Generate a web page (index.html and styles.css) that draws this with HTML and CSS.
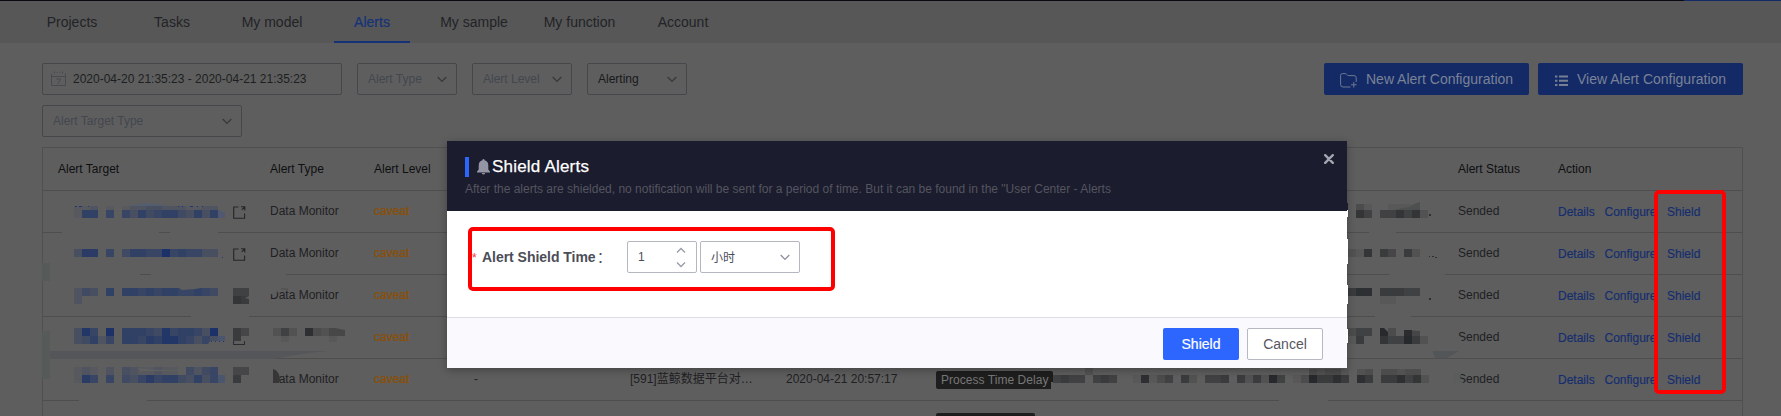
FILE: index.html
```html
<!DOCTYPE html>
<html lang="en">
<head>
<meta charset="utf-8">
<title>Alerts</title>
<link rel="stylesheet" href="styles.css">
</head>
<body>
<div class="page">
  <div class="topline"><span class="topline-accent"></span></div>
  <nav class="nav">
    <a class="tab">Projects</a><a class="tab">Tasks</a><a class="tab">My model</a><a class="tab tab-active"><span>Alerts</span></a><a class="tab">My sample</a><a class="tab">My function</a><a class="tab">Account</a>
  </nav>
  <main class="main">
    <div class="toolbar">
      <div class="filters">
        <div class="field field-date">
          <svg class="cal" width="15" height="16" viewBox="0 0 15 16" fill="none" stroke="#47494d" stroke-width="1"><path d="M.5 2.5V14.5H14.5V2.5M.5 5.5H14.5M3.5 .5v2M11.5 .5v2M5.5 1.5h1M8.5 1.5h1"/><path d="M5.3 8h4.2L7 12.8"/></svg>
          <span>2020-04-20 21:35:23 - 2020-04-21 21:35:23</span>
        </div>
        <div class="field muted"><span>Alert Type</span><svg class="chev" width="10" height="7" viewBox="0 0 10 7"><path d="M.7 1 5 5.4 9.3 1"/></svg></div>
        <div class="field muted"><span>Alert Level</span><svg class="chev" width="10" height="7" viewBox="0 0 10 7"><path d="M.7 1 5 5.4 9.3 1"/></svg></div>
        <div class="field"><span>Alerting</span><svg class="chev" width="10" height="7" viewBox="0 0 10 7"><path d="M.7 1 5 5.4 9.3 1"/></svg></div>
      </div>
      <div class="actions">
        <button class="btn-dim"><svg class="ico-folder" width="18" height="16" viewBox="0 0 18 16" fill="none" stroke="#6f7891" stroke-width="1"><path d="M10.5 14H3Q.6 14 .6 11.6V2.4Q.6.6 2.4.6H5.2Q6.2.6 6.8 1.6T8.6 2.6H14Q16.2 2.6 16.2 4.8V9M13.8 9v5.6M11 11.8h5.6"/></svg>New Alert Configuration</button>
        <button class="btn-dim"><svg class="ico-list" width="13" height="12" viewBox="0 0 13 12" fill="#777f95"><path d="M0 .5h2.4v2H0zM4 .5h9v2H4zM0 4.8h2.4v2H0zM4 4.8h9v2H4zM0 9.1h2.4v2H0zM4 9.1h9v2H4z"/></svg>View Alert Configuration</button>
      </div>
    </div>
    <div class="field field-wide muted"><span>Alert Target Type</span><svg class="chev" width="10" height="7" viewBox="0 0 10 7"><path d="M.7 1 5 5.4 9.3 1"/></svg></div>
    <div class="table" id="table">
      <div class="row head"><span>Alert Target</span><span>Alert Type</span><span>Alert Level</span><span></span><span></span><span></span><span></span><span>Alert Status</span><span>Action</span></div>
    </div>
  </main>
  <svg class="mosaic" id="mosaic" width="1781" height="416" viewBox="0 0 1781 416"></svg>
  <div class="mark mark-actions"></div>

  <section class="modal">
    <header class="modal-head">
      <div class="title"><i class="bar"></i><svg width="13" height="16" viewBox="0 0 13 16" fill="#9496a5"><path d="M6.5 0Q7.5 0 7.6 1.2Q11.3 2.2 11.3 6.5V10.5L13 12.6V13.4H0V12.6L1.7 10.5V6.5Q1.7 2.2 5.4 1.2Q5.5 0 6.5 0ZM4.8 14H8.2Q7.7 15.5 6.5 15.5T4.8 14Z"/></svg><h1>Shield Alerts</h1></div>
      <p>After the alerts are shielded, no notification will be sent for a period of time. But it can be found in the "User Center - Alerts</p>
      <svg class="close" width="10" height="10" viewBox="0 0 10 10"><path d="M1.2 1.2 8.8 8.8M8.8 1.2 1.2 8.8" stroke="#a3a4b0" stroke-width="2.4" stroke-linecap="round"/></svg>
    </header>
    <div class="modal-body">
      <div class="form-row">
        <span class="req">*</span><label>Alert Shield Time</label><span class="colon">：</span>
        <div class="input num"><span>1</span><svg width="10" height="21" viewBox="0 0 10 21" fill="none" stroke="#979ba5" stroke-width="1.3"><path d="M1 5.5 5 1.5 9 5.5M1 15.5 5 19.5 9 15.5"/></svg></div>
        <div class="input unit"><span class="hours">小时</span><svg width="10" height="7" viewBox="0 0 10 7" fill="none" stroke="#8d919d" stroke-width="1.3"><path d="M.7 1 5 5.4 9.3 1"/></svg></div>
      </div>
      <div class="mark mark-form"></div>
    </div>
    <footer class="modal-foot"><button class="ok">Shield</button><button class="cancel">Cancel</button></footer>
  </section>
  <svg class="edge" width="1" height="166" viewBox="0 0 1 166"><path fill="#1b1c2e" d="M0 0h1v7H0z"/><path fill="#fff" d="M0 7h1v7H0zM0 36h1v25H0zM0 82h1v19H0zM0 126h1v14H0z"/></svg>
</div>
<script src="app.js"></script>
</body>
</html>
```

FILE: styles.css
```css
* { box-sizing: border-box; }
body { margin: 0; font-family: "Liberation Sans", Arial, "Noto Sans CJK SC", sans-serif; font-size: 12px; line-height: 14px; color: #1f2023; background: #5e5e5e; }
.page { position: relative; width: 1781px; height: 416px; overflow: hidden; background: #5e5e5e; }
.topline { height: 1px; background: #0a0a12; display: flex; justify-content: flex-end; }
.topline-accent { width: 97px; background: #142a66; }
.nav { height: 42px; background: #575757; padding-left: 22px; display: grid; grid-template-columns: 100px 100px 100px 100px 104px 107px 100px; font-size: 14px; line-height: 43px; text-align: center; color: #222326; }
.tab { display: block; white-space: nowrap; }
.tab-active { color: #153279; padding: 0 12px; }
.tab-active span { display: block; height: 42px; border-bottom: 2px solid #153279; -webkit-text-stroke: .2px #153279; }
.main { padding: 20px 38px 0 42px; }
.toolbar { display: flex; justify-content: space-between; }
.filters { display: flex; gap: 15px; }
.actions { display: flex; gap: 9px; }
.field { width: 100px; height: 32px; border: 1px solid #45474b; border-radius: 2px; padding: 0 9px 0 10px; display: flex; align-items: center; justify-content: space-between; color: #18191b; white-space: nowrap; }
.field-date { width: 300px; padding-left: 8px; justify-content: flex-start; gap: 7px; color: #1d1e21; }
.field-wide { width: 200px; margin-top: 10px; }
.muted { color: #43474e; }
.chev { fill: none; stroke: #38393d; stroke-width: 1.3; }
.btn-dim { width: 205px; height: 32px; border: 0; border-radius: 2px; background: #132a66; color: #7a8297; font: 14px "Liberation Sans", Arial, sans-serif; display: flex; align-items: center; padding: 0; white-space: nowrap; }
.ico-folder { margin: 3px 8px 0 16px; }
.ico-list { margin: 3px 9px 0 17px; }
.table { margin-top: 10px; border: 1px solid #505050; border-bottom: 0; width: 1701px; }
.row { height: 42px; border-bottom: 1px solid #4e4e4e; display: grid; grid-template-columns: 212px 104px 100px 156px 156px 150px 522px 100px 1fr; padding: 13px 0 0 15px; align-items: start; white-space: nowrap; }
.head { height: 43px; color: #0e0f11; padding-top: 14px; }
.level { color: #8d4f04; -webkit-text-stroke: .2px #8d4f04; }
.target { display: flex; padding: 2px 0 0 175px; }
.links { display: flex; color: #142d70; padding-top: 1px; -webkit-text-stroke: .15px #142d70; }
.links a:nth-child(1) { width: 46.5px; }
.links a:nth-child(2) { width: 62.5px; }
.badge { display: block; width: 117px; height: 18px; line-height: 18px; padding: 0 5px; border-radius: 2px; background: #1e1e1e; color: #777; margin-top: -1px; font-weight: 400; letter-spacing: .04px; }
.badge-next { width: 99px; }
.proj { height: 14px; }
.mosaic { position: absolute; left: 0; top: 0; }
.edge { position: absolute; left: 1347px; top: 203px; }
.mark { position: absolute; border: 4px solid #f00; border-radius: 5px; }
.mark-actions { left: 1654px; top: 190px; width: 72px; height: 204px; }
.mark-form { left: 21px; top: 16px; width: 367px; height: 64px; }
.modal { position: absolute; left: 447px; top: 141px; width: 900px; height: 227px; display: flex; flex-direction: column; background: #fff; box-shadow: 0 2px 8px rgba(0,0,0,.3); }
.modal-head { position: relative; height: 70px; background: #1b1c2e; padding: 16px 18px 0; }
.title { display: flex; align-items: center; height: 20px; }
.bar { width: 4px; height: 20px; background: #2d66ff; margin-right: 8px; }
h1 { margin: 0 0 0 2px; font-size: 17px; font-weight: 400; color: #fff; line-height: 20px; -webkit-text-stroke: .25px #fff; letter-spacing: .2px; }
.modal-head p { margin: 5px 0 0; line-height: 14px; color: #54555f; white-space: nowrap; }
.close { position: absolute; right: 13px; top: 13px; }
.modal-body { position: relative; height: 106px; padding: 30px 0 0 25px; }
.form-row { display: flex; align-items: center; height: 32px; color: #4b4d57; }
.req { color: #f33; width: 10px; padding-top: 1px; }
.form-row label { font-size: 14px; font-weight: 700; white-space: nowrap; line-height: 16px; letter-spacing: -.03px; width: 115px; }
.colon { font-family: "Noto Sans CJK SC", sans-serif; font-size: 14px; line-height: 14px; width: 30px; padding-bottom: 3px; }
.input { height: 32px; border: 1px solid #b4b7c0; border-radius: 2px; display: flex; align-items: center; justify-content: space-between; padding: 0 9px 0 10px; }
.num { width: 70px; margin-right: 3px; padding-right: 10px; }
.unit { width: 100px; }
.hours { font-family: "Noto Sans CJK SC", sans-serif; padding-bottom: 1px; }
.modal-foot { height: 51px; background: #f9f9fe; border-top: 1px solid #dcdee5; display: flex; justify-content: flex-end; gap: 8px; padding: 10px 24px 0 0; }
.modal-foot button { width: 76px; height: 32px; border-radius: 2px; font: 14px "Liberation Sans", Arial, sans-serif; padding: 0; }
.ok { border: 0; background: #2d66ff; color: #fff; -webkit-text-stroke: .2px #fff; }
.modal-foot .cancel { border: 1px solid #b6b8c2; background: #fff; color: #55575f; }
```

FILE: app.js
```js
const link = '<svg width="13" height="13" viewBox="0 0 13 13" fill="none" stroke="#252628" stroke-width="1.1"><path d="M5.5 1H.7V12.3H11.6V7.5M8 .7h3.8V4.5M11.6 1 8.8 3.8"/></svg>';
const table = document.getElementById('table');
for (let i = 0; i < 6; i++) {
  const last = i === 4;
  const row = document.createElement('div');
  row.className = 'row';
  if (i < 5) {
    row.innerHTML = `<span class="target">${i < 2 ? link : ''}</span><span>${i === 3 ? '' : 'Data Monitor'}</span><span class="level">caveat</span><span>${last ? '-' : ''}</span><span class="proj">${last ? '[591]蓝鲸数据平台对…' : ''}</span><span>${last ? '2020-04-21 20:57:17' : ''}</span><span>${last ? '<b class="badge">Process Time Delay</b>' : ''}</span><span>Sended</span><span class="links"><a>Details</a><a>Configure</a><a>Shield</a></span>`;
  } else {
    row.innerHTML = '<i></i><i></i><i></i><i></i><i></i><i></i><b class="badge badge-next"></b>';
  }
  table.appendChild(row);
}

// Pixelated cells: each digit is the strength of one 8px cell, 0 leaves it empty.
const base = [94, 94, 94];
const blue = [27, 49, 104];
const grey = [40, 41, 44];
function mix(c, n) {
  return 'rgb(' + base.map((b, i) => Math.round(b + (c[i] - b) * n / 9)).join(',') + ')';
}
let out = '';
function cells(x, y, h, tint, levels) {
  [...levels].forEach((ch, k) => {
    if (ch !== '0') out += `<rect x="${x + 8 * k}" y="${y}" width="8" height="${h}" fill="${mix(tint, +ch)}"/>`;
  });
}
function shape(d, fill) { out += `<path d="${d}" fill="${fill}"/>`; }

// smudged table lines
shape('M62 231h97v3H62zM170 231h48v3h-48zM44 273h96v3H44zM151 273h135v3H151zM191 315h58v3h-58zM79 399h68v3H79z', '#5e5e5e');
shape('M1369 231h27v3h-27zM1389 273h56v3h-56zM1375 315h36v3h-36zM1279 399h49v3h-49z', '#5e5e5e');
shape('M42 263h8v18h-8zM42 333q2-2 4-2h4v48h-4q-2 0-4-2z', '#565b59');
shape('M50 351H328Q303 353 273 359H50z', '#545659');
shape('M1433 351h26l-12 7h-11q-3-2-3-7z', '#535659');

cells(74, 206, 4, blue, '112010122332221122');
shape('M129 206q18-5 40 0z', '#535d71');
cells(74, 210, 8, blue, '166050536456643636');
shape('M218 210h2l2 2h3v6h-7z', '#505970');
shape('M75 206h2v1h-2zM79 206h3v1h-3zM88 206h1v1h-1zM178 206h1v1h-1zM182 206h1v1h-1zM190 206h3v1h-3zM197 206h1v1h-1zM202 206h1v1h-1zM222 257h1v1h-1z', '#1c3873');
cells(74, 249, 8, blue, '377050466559565533');
cells(74, 288, 8, blue, '243060665656655654');
cells(74, 296, 8, blue, '200000000000000000');
shape('M179 288h22l-6 1-13 1z', '#5e5e5e');
cells(74, 328, 8, blue, '385090666548566539');
cells(74, 336, 8, blue, '346250665768865353');
shape('M218 336h7v5h-7z', '#4b556e');
shape('M210 341h15v3h-17z', '#5e5e5e');
shape('M211 341h1v1h-1zM215 341h1v1h-1zM219 341h1v1h-1zM223 341h1v1h-1z', '#1c3873');
cells(74, 367, 8, blue, '121020321121104245');
cells(74, 375, 8, blue, '175050435756643635');
shape('M218 375h7v8h-7z', '#4b556e');
shape('M138 368q20 3 46 2l-2 1h-42z', '#606060');

cells(233, 288, 8, grey, '55');
cells(233, 296, 8, grey, '76');
shape('M249 296v3l-4-1z', '#5e5e5e');
cells(233, 328, 8, grey, '64');
cells(233, 336, 5, grey, '60');
shape('M233 341h1v3h10v-3h1v4h-12z', '#2b2c2e');
cells(233, 367, 8, grey, '44');
cells(233, 375, 8, grey, '60');
cells(273, 328, 8, grey, '2520832');
shape('M329 328h6l10 2v6h-16z', '#474748');
cells(273, 336, 6, grey, '01000001');
shape('M269 288h10l-2 4q-1 4-6 2l-2 0z', '#5e5e5e');
shape('M281 288h7v2h-7z', '#555');
shape('M269 369h4q7 2 7 14h-11z', '#5e5e5e');
shape('M273 369q7 2 7 12l-1 2h-6z', '#363637');

cells(1348, 204, 6, grey, '03100111');
shape('M1394 210l8-2q8 0 12-4l6-2v8z', '#4e5050');
cells(1348, 210, 8, grey, '0750557572');
cells(1348, 249, 8, grey, '217064062');
cells(1348, 288, 8, grey, '688066655');
cells(1348, 296, 8, grey, '000011000');
cells(1348, 328, 8, grey, '355093044');
cells(1348, 336, 8, grey, '1600755962');
shape('M1380 328h4l4 4v-4zM1404 328h16v3l-16-1z', '#5e5e5e');
shape('M1404 330h8v6h-8z', '#2b2c2f');
shape('M1429 214h2v2h-2zM1429 298h2v2h-2zM1432 256h2v1h-2zM1435 257h2v1h-2zM1429 256h1v1h-1z', '#2e2e30');
shape('M1456 337l6 1q-2 4 3 6l-3 1-4-3z', '#5e5e5e');
shape('M1454 373h8q-4 4 1 10h-9z', '#5b5c5c');

shape('M1051 382h3v8h-3z', '#5e5e5e');
shape('M1088 368q20-4 42 0z', '#4b4b4b');
cells(1085, 367, 8, grey, '2');
cells(1053, 375, 8, grey, '56550565001813506205560626295013966860860668572');
cells(1309, 369, 6, grey, '323310230332330');
document.getElementById('mosaic').innerHTML = out;
```
